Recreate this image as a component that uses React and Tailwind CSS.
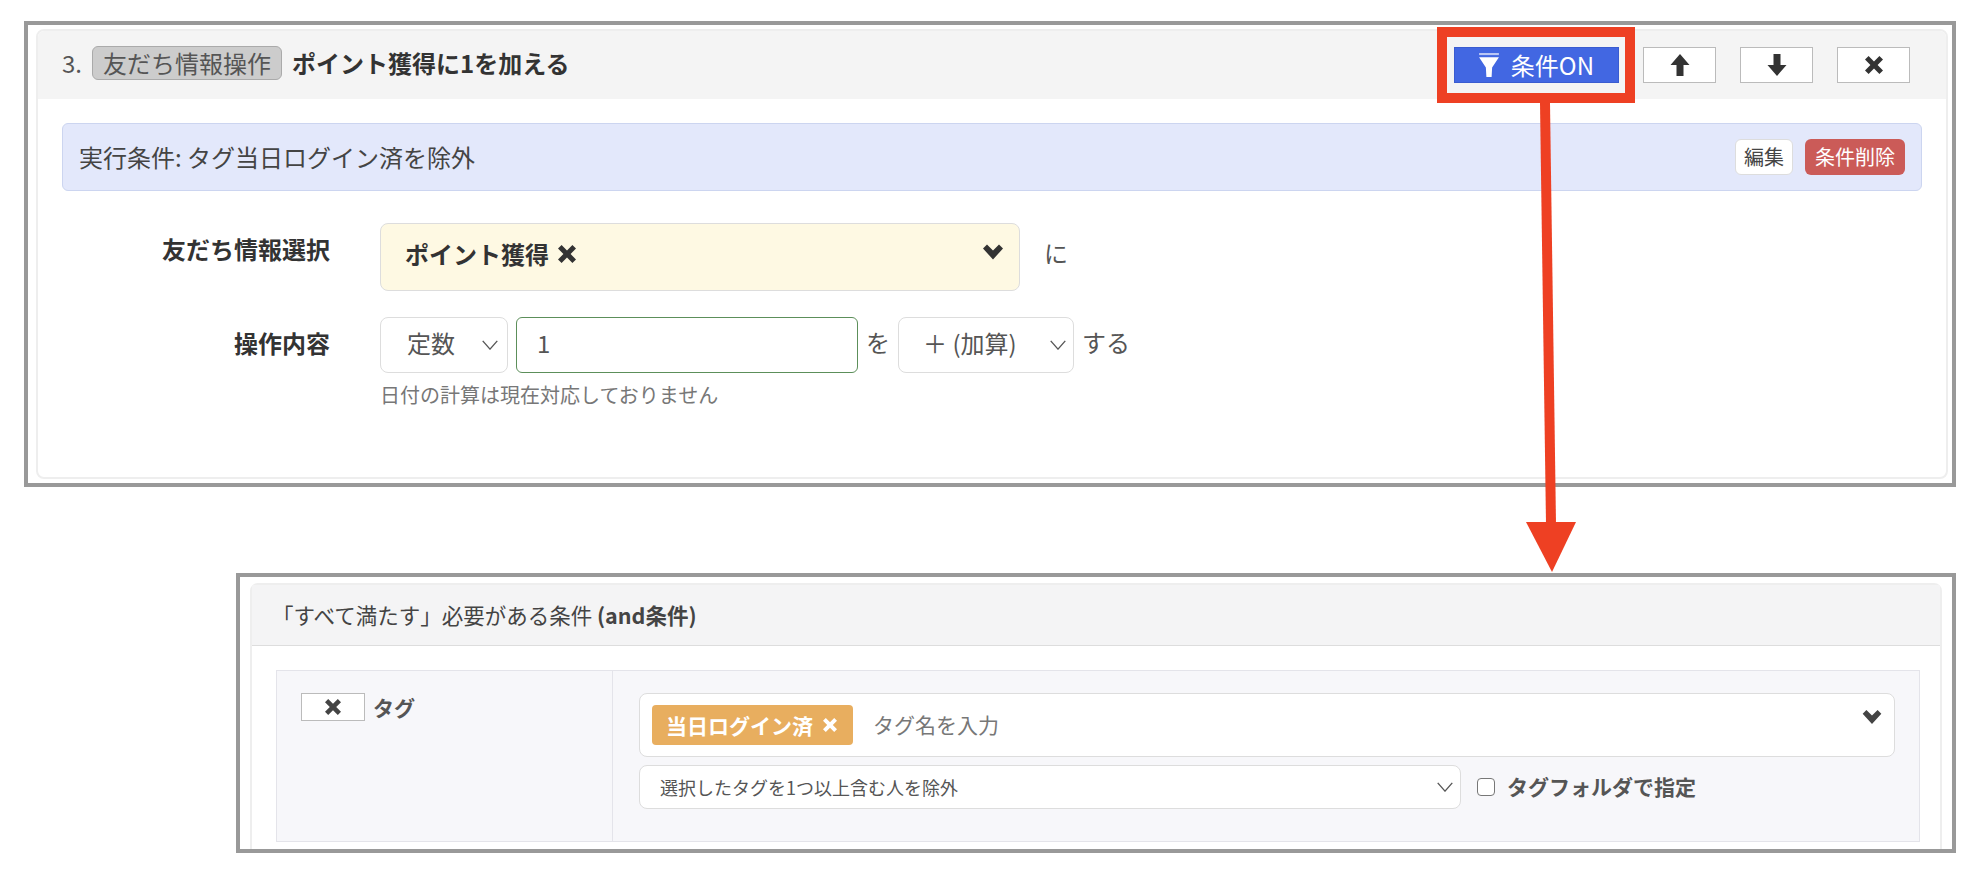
function Cross({ className }) {
  return (
    <svg viewBox="0 0 20 20" className={className} fill="currentColor" aria-hidden="true">
      <polygon points="4,0 10,6 16,0 20,4 14,10 20,16 16,20 10,14 4,20 0,16 6,10 0,4" strokeLinejoin="round" />
    </svg>
  );
}

function HeavyChevron({ className }) {
  return (
    <svg viewBox="0 0 20 15" className={className} fill="currentColor" aria-hidden="true">
      <polygon points="0,4 4,0 10,6 16,0 20,4 10,15" />
    </svg>
  );
}

function Caret({ className }) {
  return (
    <svg viewBox="0 0 18 11" className={className} fill="none" stroke="currentColor" strokeWidth="1.5" aria-hidden="true">
      <polyline points="1,1 9,10 17,1" />
    </svg>
  );
}

function ArrowUp({ className }) {
  return (
    <svg viewBox="0 0 19 22" className={className} fill="currentColor" aria-hidden="true">
      <polygon points="9.5,0 19,11 13,11 13,22 6,22 6,11 0,11" />
    </svg>
  );
}

function ArrowDown({ className }) {
  return (
    <svg viewBox="0 0 19 22" className={className} fill="currentColor" aria-hidden="true">
      <polygon points="6,0 13,0 13,11 19,11 9.5,22 0,11 6,11" />
    </svg>
  );
}

function Funnel({ className }) {
  return (
    <svg viewBox="0 0 19 23" className={className} aria-hidden="true">
      <rect x="0" y="0" width="19" height="2" fill="#b9c6f4" />
      <polygon points="0,4 19,4 12.5,14 12,23 7,23 6.5,14" fill="#ffffff" />
    </svg>
  );
}

function SelectBox({ children, className, textClass = "" }) {
  return (
    <div className={"flex items-center justify-between rounded-lg border border-[#ddd] bg-white text-[#555] " + className}>
      <span className={"whitespace-nowrap " + textClass}>{children}</span>
      <Caret className="h-2.5 w-4.5 shrink-0" />
    </div>
  );
}

function IconButton({ children }) {
  return (
    <button className="flex h-9 w-[73px] items-center justify-center border border-[#bbb] bg-white text-[#333]">
      {children}
    </button>
  );
}

export default function App() {
  return (
    <div className="relative min-h-screen overflow-hidden bg-white font-['Noto_Sans_CJK_JP','Noto_Sans',sans-serif] text-[#333]">
      <div className="mt-[21px] mr-6.5 ml-6 border-4 border-[#999] pt-1 pr-1 pb-1 pl-2">
        <div className="rounded-lg border-2 border-[#eee]">
          <div className="flex h-17 items-center rounded-t-md bg-[#f4f4f4] pr-9 pl-6 text-2xl">
            <div className="flex items-center pb-1">
              <span className="mr-2.5 text-[#555]">3.</span>
              <span className="rounded-md border border-[#aaa] bg-[#ccc] px-2.5 text-[#555]">友だち情報操作</span>
              <span className="ml-2.5 font-bold">ポイント獲得に1を加える</span>
            </div>
            <div className="ml-auto flex items-center gap-6">
              <button className="flex h-9 items-center gap-3 border border-[#3a5cd0] bg-[#4267e2] px-6 text-2xl text-white">
                <Funnel className="h-6 w-5" />
                条件ON
              </button>
              <IconButton><ArrowUp className="h-5.5 w-5" /></IconButton>
              <IconButton><ArrowDown className="h-5.5 w-5" /></IconButton>
              <IconButton><Cross className="h-4.5 w-5" /></IconButton>
            </div>
          </div>

          <div className="px-6 pt-6 pb-17 text-2xl">
            <div className="flex h-17 items-center justify-between rounded-md border border-[#ccd5f0] bg-[#e3e8fb] px-4">
              <span className="text-[#444]">実行条件: タグ当日ログイン済を除外</span>
              <div className="flex gap-3 text-xl">
                <button className="flex h-9 items-center rounded-md border border-[#ddd] bg-white px-2 text-[#444]">編集</button>
                <button className="flex h-9 items-center rounded-md bg-[#cb5b58] px-2.5 text-white">条件削除</button>
              </div>
            </div>

            <div className="mt-8 flex items-start gap-12 pl-3">
              <div className="w-64 shrink-0 pt-2.5 text-right font-bold">友だち情報選択</div>
              <div className="ml-0.5 flex items-start">
                <div className="flex h-17 w-160 items-start justify-between rounded-lg border border-[#ddd] bg-[#fef9e3] pt-3.5 pr-4 pl-6 font-bold">
                  <span className="flex items-center gap-2">
                    ポイント獲得
                    <Cross className="h-4.5 w-5" />
                  </span>
                  <HeavyChevron className="mt-1.5 h-4 w-5" />
                </div>
                <span className="mt-3.5 ml-6 text-[#555]">に</span>
              </div>
            </div>

            <div className="mt-6.5 flex items-start gap-12 pl-3">
              <div className="w-64 shrink-0 pt-2.5 text-right font-bold">操作内容</div>
              <div className="ml-0.5">
                <div className="flex items-center gap-2">
                  <SelectBox className="h-14 w-32 pr-2 pl-6.5" textClass="pb-1">定数</SelectBox>
                  <div className="flex h-14 w-[342px] items-center rounded-md border border-[#5c8f5a] bg-white pb-1 pl-5 text-[#555]">1</div>
                  <span className="-mt-1.5 text-[#555]">を</span>
                  <SelectBox className="h-14 w-44 pr-1.5 pl-6" textClass="pb-1">＋ (加算)</SelectBox>
                  <span className="-mt-1.5 text-[#555]">する</span>
                </div>
                <p className="mt-2 text-xl text-[#777]">日付の計算は現在対応しておりません</p>
              </div>
            </div>
          </div>
        </div>
      </div>

      <div className="mt-[86px] mr-6.5 ml-[236px] h-70 overflow-hidden border-4 border-[#999] px-2.5 pt-1.5 text-[21px]">
        <div className="rounded-t-lg border-2 border-[#eee]">
          <div className="border-b border-[#ddd] bg-[#f4f4f5] py-4 pl-5 text-[21.5px] leading-7 text-[#444]">
            「すべて満たす」必要がある条件 <span className="font-bold">(and条件)</span>
          </div>
          <div className="pt-6 pr-5 pb-6 pl-6">
            <div className="flex h-43 border border-[#e4e4ea] bg-[#f7f7fa]">
              <div className="flex w-84 shrink-0 items-start gap-2 border-r border-[#e4e4ea] pt-5.5 pl-6">
                <button className="flex h-7 w-16 items-center justify-center border border-[#bbb] bg-white text-[#444]">
                  <Cross className="h-4 w-4.5" />
                </button>
                <span className="leading-7 font-bold text-[#555]">タグ</span>
              </div>
              <div className="min-w-0 flex-1 pt-5.5 pr-6 pl-6.5">
                <div className="flex h-16 items-center justify-between rounded-lg border border-[#ddd] bg-white pr-3 pl-3">
                  <div className="flex items-center">
                    <span className="flex items-center gap-2.5 rounded bg-[#e8ae5f] py-1.5 pr-4 pl-3.5 leading-7 font-bold text-white">
                      当日ログイン済
                      <Cross className="h-3.5 w-3.5" />
                    </span>
                    <span className="ml-5 text-[#777]">タグ名を入力</span>
                  </div>
                  <HeavyChevron className="mb-4 h-3.5 w-5 text-[#444]" />
                </div>
                <div className="mt-2 flex items-center">
                  <SelectBox className="h-11 w-[822px] pr-1.5 pl-5 text-lg">選択したタグを1つ以上含む人を除外</SelectBox>
                  <input type="checkbox" className="ml-4 h-4.5 w-4.5 appearance-none rounded-sm border border-[#777] bg-white" />
                  <span className="ml-3 font-bold text-[#555]">タグフォルダで指定</span>
                </div>
              </div>
            </div>
          </div>
        </div>
      </div>

      <svg className="pointer-events-none absolute inset-0 h-full w-full" aria-hidden="true">
        <rect x="1442" y="32" width="188" height="66" fill="none" stroke="#ee4023" strokeWidth="10" />
        <polygon points="1540,103 1550,103 1556,524 1546,524" fill="#ee4023" />
        <polygon points="1526,522 1576,522 1552,572" fill="#ee4023" />
      </svg>
    </div>
  );
}
